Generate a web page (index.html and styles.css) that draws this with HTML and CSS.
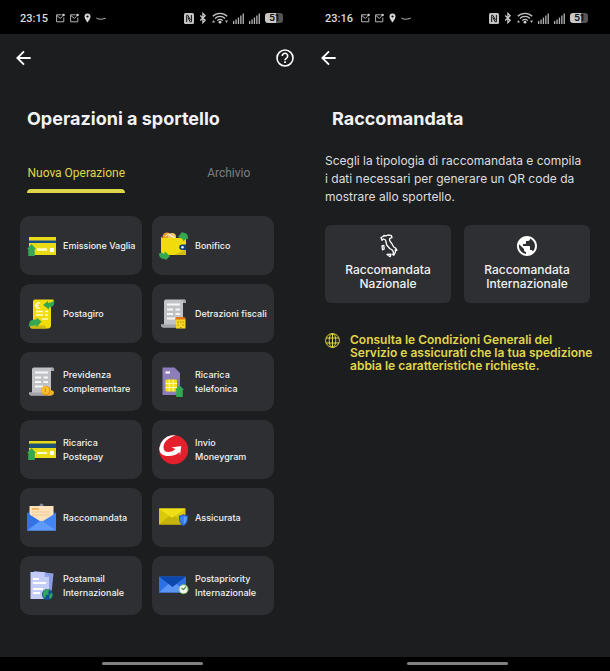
FILE: index.html
```html
<!DOCTYPE html>
<html lang="it">
<head>
    <meta charset="UTF-8">
    <meta name="viewport" content="width=device-width, initial-scale=1.0">
    <title>Operazioni a sportello</title>
    <link rel="stylesheet" href="styles.css">
</head>
<body>
    <!-- Shared icons -->
    <svg class="sprite" aria-hidden="true">
        <symbol id="mail" viewBox="0 0 9 10">
            <path d="M5.500 1.800H.6v7h7.200V4.600M.8 2.400l3.400 3 2.400-2" fill="none" stroke="#b4b4b4" stroke-width="1"/>
            <circle cx="7.500" cy="2" r="1.300" fill="#d0d0d0"/>
        </symbol>
        <symbol id="pin" viewBox="0 0 7 10">
            <path fill="#d8d8d8" fill-rule="evenodd" d="M3.500.5a3 3 0 0 0-3 3c0 2.300 3 6 3 6s3-3.700 3-6a3 3 0 0 0-3-3zm0 1.900a1.100 1.100 0 1 1 0 2.200 1.100 1.100 0 0 1 0-2.200z"/>
        </symbol>
        <symbol id="swoosh" viewBox="0 0 10 10">
            <path d="M.3 5c2 1.500 5 1.700 9.400.2" fill="none" stroke="#b4b4b4" stroke-width="1"/>
        </symbol>
        <symbol id="nfc" viewBox="0 0 10 11">
            <rect width="10" height="11" rx="1.500" fill="#c4c4c4"/>
            <path d="M2.700 9V2.300h1.100l2.600 4.500M7.400 2v6.800H6.200L3.800 4.400" fill="none" stroke="#111" stroke-width="1"/>
        </symbol>
        <symbol id="bluetooth" viewBox="0 0 8 12">
            <path d="M1.200 3.500l5 4.800L3.900 10.700V1.300l2.300 2.400-5 4.800" fill="none" stroke="#d0d0d0" stroke-width="1.200"/>
        </symbol>
        <symbol id="wifi" viewBox="0 0 16 12">
            <path d="M.8 4.300a10.200 10.200 0 0 1 14.400 0M3 6.500a7 7 0 0 1 10 0M5.200 8.600a4 4 0 0 1 5.600 0" fill="none" stroke="#c4c4c4" stroke-width="1.300"/>
            <circle cx="8" cy="10.200" r="1.400" fill="#d0d0d0"/>
            <path d="M0 10.500l1.500-2.500L3 10.500zM13 8.500h3l-1.500 2.500z" fill="#b4b4b4"/>
        </symbol>
        <symbol id="signal" viewBox="0 0 11 11">
            <path fill="#b4b4b4" d="M0 8h1.300v3H0zM2.400 6.500h1.300V11H2.400zM4.800 4.500h1.300V11H4.800zM7.200 2.500h1.300V11H7.200zM9.600.5h1.300V11H9.600z"/>
        </symbol>
        <symbol id="back" viewBox="0 0 24 24">
            <path d="M20 12H5M12 4l-8 8 8 8" fill="none" stroke="#fff" stroke-width="2.200"/>
        </symbol>
        <symbol id="arrow-up" viewBox="0 0 9 12">
            <path d="M4.500 0L9 5H7.800v7H1.200V5H0z" fill="#34a853"/>
        </symbol>
        <symbol id="receipt" viewBox="0 0 30 30">
            <path d="M7 .5h18.500c1.500 0 1.500 2.500 1.500 3.500h-3v24.500H4.500c-2 0-2.500-1.500-2.500-3h3V3c0-1.500.5-2.500 2-2.500z" fill="#c1c2c6"/>
            <path d="M24 4c0-2 .5-3.500 1.700-3.500 1.300 0 1.300 2.500 1.300 3.500zM2 25.500h15c0 1.500.5 3 2 3H4.500c-2 0-2.500-1.500-2.500-3z" fill="#a3a4a9"/>
            <path d="M8 5.500h13M8 10.500h6M16.500 10.500h4.500M8 15h6M16.500 15h4.500M8 19.500h8" stroke="#f7f7f7" stroke-width="2"/>
        </symbol>
    </svg>

    <main class="screens">
        <section class="screen">
            <div class="status-bar">
                <span class="time">23:15</span>
                <svg width="9" height="10"><use href="#mail"/></svg>
                <svg width="9" height="10"><use href="#mail"/></svg>
                <svg width="7" height="10"><use href="#pin"/></svg>
                <svg width="10" height="10"><use href="#swoosh"/></svg>
                <div class="status-right">
                    <svg width="10" height="11"><use href="#nfc"/></svg>
                    <svg width="8" height="12"><use href="#bluetooth"/></svg>
                    <svg width="16" height="12"><use href="#wifi"/></svg>
                    <svg width="11" height="11"><use href="#signal"/></svg>
                    <svg width="11" height="11"><use href="#signal"/></svg>
                    <span class="battery">51</span>
                </div>
            </div>

            <header class="top-bar">
                <button class="icon-btn" aria-label="Indietro"><svg width="20" height="20"><use href="#back"/></svg></button>
                <button class="icon-btn" aria-label="Aiuto">
                    <svg width="20" height="20" viewBox="0 0 20 20" fill="none" stroke="#fff">
                        <circle cx="10" cy="10" r="8" stroke-width="1.600"/>
                        <path d="M7.300 8a2.700 2.700 0 1 1 4.300 2.100c-1 .7-1.600 1-1.600 2.100" stroke-width="1.600"/>
                        <path d="M10 13.300v1.700" stroke-width="1.700"/>
                    </svg>
                </button>
            </header>

            <h1>Operazioni a sportello</h1>

            <div class="tabs" role="tablist">
                <button class="tab active" role="tab" aria-selected="true"><span>Nuova Operazione</span></button>
                <button class="tab" role="tab" aria-selected="false"><span>Archivio</span></button>
            </div>

            <div class="operations">
                <button class="card">
                    <svg viewBox="0 0 30 30">
                        <rect x="2" y="6" width="27" height="18" fill="#e9dc17"/>
                        <path d="M2 9.500h27v2.500H2z" fill="#16508c"/>
                        <path d="M10 18.500h10" stroke="#fffbd0" stroke-width="2.500"/>
                        <rect x="23" y="17" width="4" height="4" fill="#fff"/>
                        <use href="#arrow-up" x="0" y="13" width="9" height="12"/>
                    </svg>
                    <span>Emissione Vaglia</span>
                </button>
                <button class="card">
                    <svg viewBox="0 0 30 30">
                        <circle cx="8" cy="6" r="4.500" fill="#f29a2e"/>
                        <circle cx="13" cy="6" r="4" fill="#f6c66a"/>
                        <path d="M6 6l3-3 7 4" fill="none" stroke="#fff" stroke-width="1"/>
                        <path d="M2 5c0 1.500 1 2 3 2h20c1 0 2 .8 2 2v15H5c-2 0-3-1-3-3z" fill="#f0dc0a"/>
                        <path d="M27 18v6H15z" fill="#d1bd10"/>
                        <path d="M27 13.500h-4a2.700 2.700 0 0 0 0 5.500h4z" fill="#14407a"/>
                        <circle cx="23.500" cy="16.200" r="1.200" fill="#fff"/>
                        <path d="M19 6l4-5 2 1c3 0 4 2 4 6l-3 .5-1.500 2-1-2.500z" fill="#34a853"/>
                        <path d="M11 25l-4 4-1-1c-4 0-6-2-6-5.500l3-1L5 23l1-2.500z" fill="#34a853"/>
                    </svg>
                    <span>Bonifico</span>
                </button>
                <button class="card">
                    <svg viewBox="0 0 30 30">
                        <path d="M8 .5h18c1.300 0 1 2.500 1 3.500h-3v22c0 2-1 3.500-3 3.500H5c-1.500 0-2-1.500-2-3h3V3c0-1.500.5-2.500 2-2.500z" fill="#f0dc0a"/>
                        <path d="M3 26.500h15c0 1.500 1 3 3 3H5c-1.500 0-2-1.500-2-3z" fill="#cdb90f"/>
                        <path d="M13 4.500a2.600 2.600 0 1 0 0 4M8.500 6.500h3.500M9 12.500h7M18 12.500h3M9 16h7M18 16h3M15 20h6" stroke="#fffad0" stroke-width="1.300" fill="none"/>
                        <path d="M16 6l5-4v2c3-1 5-1 6-3 1 5-1 7-5 7.500v2z" fill="#34a853"/>
                        <path d="M14.500 22.500l-5-4v2c-4 0-7 1-7 3l-1 4c3-1 5-1 8-1v2z" fill="#34a853"/>
                    </svg>
                    <span>Postagiro</span>
                </button>
                <button class="card">
                    <svg viewBox="0 0 30 30">
                        <use href="#receipt" width="30" height="30"/>
                        <path d="M17 20h9.500v9.500H17z" fill="#f5d821"/>
                        <path d="M16 20.500l1.500-2.500h8l1.500 2.500z" fill="#e0761c"/>
                        <path d="M18.500 23h1.500M21 23h1.500M23.500 23h1.500M18.500 26h1.500M23.500 26h1.500M21 28.500h1.500" stroke="#b98418" stroke-width="1.100"/>
                    </svg>
                    <span>Detrazioni fiscali</span>
                </button>
                <button class="card">
                    <svg viewBox="0 0 30 30">
                        <use href="#receipt" width="30" height="30"/>
                        <ellipse cx="22.500" cy="25.800" rx="4.500" ry="2.800" fill="#f0b429"/>
                        <circle cx="18.800" cy="23.700" r="4.800" fill="#e99a14"/>
                        <circle cx="18.300" cy="23.300" r="3.800" fill="#f8c630"/>
                        <path d="M18.300 21v4.600" stroke="#e08c12" stroke-width="1.200"/>
                    </svg>
                    <span>Previdenza complementare</span>
                </button>
                <button class="card">
                    <svg viewBox="0 0 30 30">
                        <path d="M3.500.5h12L21 6v22H3.500z" fill="#8d7dba"/>
                        <path d="M6.500 5.500h4.500" stroke="#fff" stroke-width="2"/>
                        <rect x="6.500" y="12.500" width="11.500" height="12" rx="1" fill="#f2df18"/>
                        <path d="M6.500 16.500h11.500M6.500 20.500h11.500M10.300 12.500v12M14.200 12.500v12" stroke="#fffbe0" stroke-width=".8"/>
                        <use href="#arrow-up" x="16" y="18" width="9" height="12"/>
                    </svg>
                    <span>Ricarica<br>telefonica</span>
                </button>
                <button class="card">
                    <svg viewBox="0 0 30 30">
                        <rect x="2" y="6" width="27" height="17" fill="#e9dc17"/>
                        <path d="M2 8.500h27V13H2z" fill="#1b5278"/>
                        <path d="M10 18h10" stroke="#fffbd0" stroke-width="2"/>
                        <circle cx="25" cy="18" r="2.300" fill="#fff"/>
                        <use href="#arrow-up" x="0" y="13" width="9" height="12"/>
                    </svg>
                    <span>Ricarica<br>Postepay</span>
                </button>
                <button class="card">
                    <svg viewBox="0 0 30 30">
                        <circle cx="14.700" cy="14.700" r="14.500" fill="#e3202b"/>
                        <!-- curved arrow -->
                        <path d="M13 .3A14.500 14.500 0 0 0 .3 13C0 18.500 4 21 9.500 21c4.500 0 8.500-1.500 11-4l.5 3.500 1.300-9.500-9.800 1.500 4 1.500c-2 2-4.500 3-7 3-3 0-5-1.500-5-4.500C4.500 7 9 2.500 17 .5z" fill="#fff"/>
                    </svg>
                    <span>Invio<br>Moneygram</span>
                </button>
                <button class="card">
                    <svg viewBox="0 0 30 30">
                        <path d="M0 10l3-2h23l3 2v8H0z" fill="#1b55b5"/>
                        <circle cx="14.500" cy="2.500" r="2" fill="#7f8794"/>
                        <path d="M2.500 3h24v16h-24z" fill="#fde3bd"/>
                        <path d="M5 6h7" stroke="#e9a13b" stroke-width="1.300"/>
                        <path d="M5 9h18M5 12h18" stroke="#f3c78c" stroke-width="1"/>
                        <path d="M0 10l14.500 9L29 10v17.500H0z" fill="#4285f4"/>
                        <path d="M0 27.500l14.500-10 14.500 10z" fill="#5f9bfa"/>
                        <path d="M0 10l12 7.800L0 27.500z" fill="#3173e4"/>
                    </svg>
                    <span>Raccomandata</span>
                </button>
                <button class="card">
                    <svg viewBox="0 0 30 30">
                        <path d="M0 5.500h26.500v16H0z" fill="#dbc90c"/>
                        <path d="M0 5.500h26.500L13.200 15z" fill="#f0df16"/>
                        <path d="M0 21.500L10.500 13l2.700 2 2.700-2 10.600 8.500z" fill="#c5b30b"/>
                        <path d="M24.500 11c1.500 1 3 1.500 4.700 1.500 0 5-1 8.500-4.700 10.500-3.700-2-4.700-5.500-4.700-10.500 1.700 0 3.200-.5 4.700-1.500z" fill="#1f5fd0"/>
                        <path d="M24.500 12.500c1 .8 2.200 1.200 3.500 1.200 0 3.800-.8 6.300-3.500 8z" fill="#5b9cf5"/>
                        <path d="M24.500 12.500c-1 .8-2.200 1.200-3.500 1.200 0 3.800.8 6.300 3.500 8z" fill="#3f82ec"/>
                    </svg>
                    <span>Assicurata</span>
                </button>
                <button class="card">
                    <svg viewBox="0 0 30 30">
                        <path d="M7 0l19.500 2.500L24 27 7 25z" fill="#8d9be0"/>
                        <path d="M3.500 1h14L22 6v22H3.500z" fill="#c3cdf8"/>
                        <path d="M17.500 1L22 6h-4.500z" fill="#97a6ea"/>
                        <path d="M6 8h6M6 12h13M6 18h10M6 22h7" stroke="#fff" stroke-width="1.800"/>
                        <circle cx="20.500" cy="23.500" r="5.500" fill="#14508f"/>
                        <path d="M17 20c2-2.500 5-2.500 6-1l-2 2 1 2-3 1.500-1 3c-2-1-3-4-1-7.500zM23.500 22l2 1c0 2.500-1 4-2.500 5l-1-2.500z" fill="#2fa55c"/>
                    </svg>
                    <span>Postamail Internazionale</span>
                </button>
                <button class="card">
                    <svg viewBox="0 0 30 30">
                        <path d="M0 5.500h27v16H0z" fill="#2d71e6"/>
                        <path d="M0 21.500L10.500 12h6L27 21.500z" fill="#5b96f7"/>
                        <path d="M0 5.500h27L13.500 16z" fill="#0c47ac"/>
                        <circle cx="24.500" cy="18.200" r="5" fill="#7fb95a"/>
                        <circle cx="24.500" cy="18.200" r="3.900" fill="#f4f8ef"/>
                        <path d="M22.500 17l2 1.700 2.500-3" fill="none" stroke="#3f9142" stroke-width="1.300"/>
                    </svg>
                    <span>Postapriority Internazionale</span>
                </button>
            </div>

            <div class="nav-bar"><span></span></div>
        </section>

        <section class="screen">
            <div class="status-bar">
                <span class="time">23:16</span>
                <svg width="9" height="10"><use href="#mail"/></svg>
                <svg width="9" height="10"><use href="#mail"/></svg>
                <svg width="7" height="10"><use href="#pin"/></svg>
                <svg width="10" height="10"><use href="#swoosh"/></svg>
                <div class="status-right">
                    <svg width="10" height="11"><use href="#nfc"/></svg>
                    <svg width="8" height="12"><use href="#bluetooth"/></svg>
                    <svg width="16" height="12"><use href="#wifi"/></svg>
                    <svg width="11" height="11"><use href="#signal"/></svg>
                    <svg width="11" height="11"><use href="#signal"/></svg>
                    <span class="battery">51</span>
                </div>
            </div>

            <header class="top-bar">
                <button class="icon-btn" aria-label="Indietro"><svg width="20" height="20"><use href="#back"/></svg></button>
            </header>

            <h1>Raccomandata</h1>

            <p class="intro">Scegli la tipologia di raccomandata e compila<br>i dati necessari per generare un QR code da<br>mostrare allo sportello.</p>

            <div class="choices">
                <button class="choice">
                    <svg width="24" height="24" viewBox="0 0 24 24" fill="none" stroke="#fff" stroke-width="1.300" stroke-linejoin="round">
                        <path d="M5 3.500l2-1 1-1 2 .3L12 1l3.500.7.5 2-2.200.6-.3 2 2.500 3.500 1.500 3 2.300 1.500 1.200 2-1.800-.3.300 2-1.700 3.200-1-.5.700-2.500-1.300-2.200-2.500-1.500-3-3.500L9.500 6 7.500 5 6 6.300z"/>
                        <path d="M6 12l1.800-.5.4 3.500-1.700.8z"/>
                        <path d="M11 20.500l4-.3-.8 2.500z"/>
                    </svg>
                    <span>Raccomandata<br>Nazionale</span>
                </button>
                <button class="choice">
                    <svg width="24" height="24" viewBox="0 0 24 24">
                        <path fill="#fff" d="M12 2C6.480 2 2 6.480 2 12s4.480 10 10 10 10-4.480 10-10S17.520 2 12 2zm-1 17.930c-3.950-.49-7-3.850-7-7.930 0-.62.080-1.210.210-1.790L9 15v1c0 1.100.9 2 2 2v1.930zm6.900-2.540c-.26-.81-1-1.390-1.900-1.390h-1v-3c0-.55-.45-1-1-1H8v-2h2c.55 0 1-.45 1-1V7h2c1.100 0 2-.9 2-2v-.41c2.930 1.190 5 4.060 5 7.410 0 2.080-.8 3.970-2.100 5.390z"/>
                    </svg>
                    <span>Raccomandata<br>Internazionale</span>
                </button>
            </div>

            <a class="terms" href="#">
                <svg width="15" height="15" viewBox="0 0 15 15" fill="none" stroke="#e0d64a" stroke-width="1">
                    <circle cx="7.500" cy="7.500" r="6.900"/>
                    <ellipse cx="7.500" cy="7.500" rx="3.300" ry="6.900"/>
                    <path d="M7.500.6v13.800M1.200 5h12.600M1.200 10h12.600"/>
                </svg>
                <span>Consulta le Condizioni Generali del<br>Servizio e assicurati che la tua spedizione<br>abbia le caratteristiche richieste.</span>
            </a>

            <div class="nav-bar"><span></span></div>
        </section>
    </main>
</body>
</html>
```
FILE: styles.css
```css
* {
    box-sizing: border-box;
}
body {
    margin: 0;
    background-color: #1c1d1f;
    color: #f2f2f2;
    font-family: Inter, 'Liberation Sans', sans-serif;
}
button {
    padding: 0;
    border: none;
    background: none;
    color: inherit;
    font-family: inherit;
    cursor: pointer;
}
svg {
    display: block;
    flex-shrink: 0;
}
.sprite {
    position: absolute;
    width: 0;
    height: 0;
}
.screens {
    display: flex;
    min-height: 100vh;
}
.screen {
    flex: 1;
    min-width: 0;
    display: flex;
    flex-direction: column;
}

/* Status bar */
.status-bar {
    display: flex;
    align-items: center;
    gap: 5px;
    height: 34px;
    padding: 2px 22px 0 20px;
    background-color: #000;
}
.time {
    margin-right: 3px;
    font-family: Roboto, sans-serif;
    font-size: 11px;
    font-weight: 500;
    color: #dcdcdc;
}
.status-right {
    display: flex;
    align-items: center;
    gap: 5px;
    margin-left: auto;
}
.battery {
    width: 18px;
    height: 10px;
    border-radius: 3px;
    background: linear-gradient(90deg, #c8c8c8 60%, #555 60%);
    color: #111;
    font-size: 9px;
    font-weight: 700;
    line-height: 10px;
    text-align: center;
}

/* Header */
.top-bar {
    display: flex;
    align-items: center;
    justify-content: space-between;
    height: 47px;
    padding: 0 10px 0 14px;
}
h1 {
    margin: 26px 27px 0;
    font-size: 18px;
    font-weight: 700;
    line-height: 24px;
}

/* Tabs */
.tabs {
    display: flex;
    align-items: flex-start;
    margin-top: 34px;
}
.tab {
    flex: 1;
    font-family: Roboto, sans-serif;
    font-size: 12px;
    line-height: 16px;
    color: #7e7e84;
}
.tab span {
    display: inline-block;
}
.tab.active {
    color: #e0d64a;
}
.tab.active span::after {
    content: "";
    display: block;
    height: 4px;
    margin-top: 8px;
    border-radius: 4px 4px 0 0;
    background-color: #e0d64a;
}

/* Operation cards */
.operations {
    display: grid;
    grid-template-columns: 1fr 1fr;
    gap: 9px 10px;
    margin: 23px 31px 20px 20px;
}
.card {
    display: flex;
    align-items: center;
    gap: 6px;
    min-height: 59px;
    padding: 0 0 0 7px;
    border-radius: 10px;
    background-color: #2e2f33;
    font-size: 9px;
    font-weight: 500;
    line-height: 14px;
    text-align: left;
}
.card svg {
    width: 30px;
    height: 30px;
}

/* Raccomandata */
.intro {
    margin: 21px 20px 0;
    font-size: 12px;
    line-height: 18px;
    color: #dededf;
}
.choices {
    display: flex;
    gap: 13px;
    margin: 19px 20px 0;
}
.choice {
    flex: 1;
    display: flex;
    flex-direction: column;
    align-items: center;
    gap: 5px;
    padding: 9px 0 12px;
    border-radius: 6px;
    background-color: #2e2f33;
    font-size: 12px;
    font-weight: 500;
    line-height: 14px;
}
.terms {
    display: flex;
    gap: 10px;
    margin: 30px 16px 0 20px;
    color: #e0d64a;
    font-size: 12px;
    font-weight: 600;
    line-height: 13px;
    text-decoration: none;
}

/* Bottom bar */
.nav-bar {
    display: flex;
    justify-content: center;
    margin-top: auto;
    height: 14px;
    padding-top: 5px;
    background-color: #000;
}
.nav-bar span {
    width: 101px;
    height: 3px;
    border-radius: 2px;
    background-color: #808080;
}
```
